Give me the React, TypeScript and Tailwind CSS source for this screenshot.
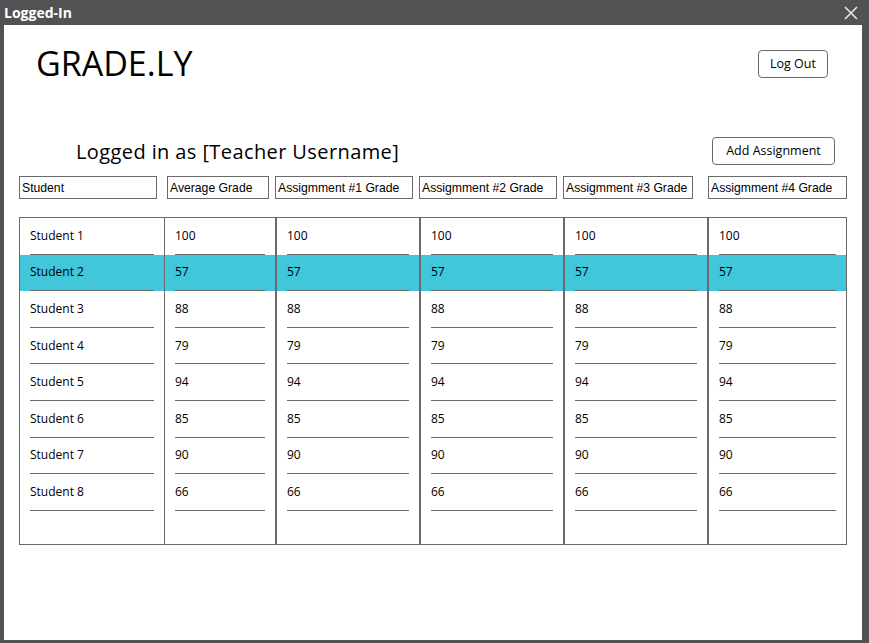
const students = [
  { name: "Student 1", grades: [100, 100, 100, 100, 100] },
  { name: "Student 2", grades: [57, 57, 57, 57, 57] },
  { name: "Student 3", grades: [88, 88, 88, 88, 88] },
  { name: "Student 4", grades: [79, 79, 79, 79, 79] },
  { name: "Student 5", grades: [94, 94, 94, 94, 94] },
  { name: "Student 6", grades: [85, 85, 85, 85, 85] },
  { name: "Student 7", grades: [90, 90, 90, 90, 90] },
  { name: "Student 8", grades: [66, 66, 66, 66, 66] },
];

// column boxes, widths read off the mockup
const cols = [
  "w-[144px]",
  "w-[111px] border-l border-[#6a6a6a]",
  "w-[144px] border-l-2 border-[#6a6a6a]",
  "w-[144px] border-l-2 border-[#6a6a6a]",
  "w-[144px] border-l-2 border-[#6a6a6a]",
  "flex-1 border-l-2 border-[#6a6a6a]",
];

const headers = [
  { label: "Student", cls: "w-[138px]" },
  { label: "Average Grade", cls: "w-[102px] ml-[10px]" },
  { label: "Assigmment #1 Grade", cls: "w-[138px] ml-[6px]" },
  { label: "Assigmment #2 Grade", cls: "w-[138px] ml-[6px]" },
  { label: "Assigmment #3 Grade", cls: "w-[130px] ml-[6px]" },
  { label: "Assigmment #4 Grade", cls: "w-[139px] ml-[15px]" },
];

function App() {
  const selected = 1;

  return (
    <div className="h-[643px] w-[869px] bg-[#525252] flex flex-col font-['Open_Sans',sans-serif] text-black">
      {/* window title bar */}
      <div className="h-[25px] flex items-center justify-between pl-[4px] pr-[11px]">
        <span className="text-white font-bold text-[14px] leading-none">Logged-In</span>
        <svg width="14" height="14" viewBox="0 0 14 14" className="text-[#e6e6e6]">
          <path d="M1 1 L13 13 M13 1 L1 13" stroke="currentColor" strokeWidth="1.6" />
        </svg>
      </div>

      <div className="flex-1 bg-white ml-[4px] mr-[7px] mb-[3px] flex flex-col">
        {/* top header */}
        <div className="flex items-start justify-between pt-[21px] pl-[32px] pr-[34px]">
          <h1 className="text-[34px] leading-[34px]">GRADE.LY</h1>
          <button className="mt-[4px] h-[28px] w-[70px] border border-[#6a6a6a] rounded-[4px] text-[12.5px]">
            Log Out
          </button>
        </div>

        <div className="flex items-center justify-between mt-[57px] pl-[72px] pr-[27px] h-[28px]">
          <h2 className="text-[20px] leading-[28px] tracking-[0.4px] pt-[2px]">Logged in as [Teacher Username]</h2>
          <button className="h-[28px] w-[123px] border border-[#6a6a6a] rounded-[4px] text-[12.5px]">
            Add Assignment
          </button>
        </div>

        {/* column headers */}
        <div className="flex mt-[11px] ml-[15px]">
          {headers.map((h) => (
            <input
              key={h.label}
              readOnly
              value={h.label}
              className={`${h.cls} h-[23px] border border-[#6a6a6a] px-[2px] text-[12.2px] font-['Liberation_Sans',sans-serif] outline-none`}
            />
          ))}
        </div>

        {/* grades table */}
        <div className="mt-[18px] ml-[15px] w-[828px] h-[328px] border border-[#6a6a6a] flex flex-col">
          {students.map((s, i) => (
            <div key={s.name} className={`flex h-[36.6px] ${i === selected ? "bg-[#41c6da]" : ""}`}>
              {[s.name, ...s.grades.map(String)].map((val, c) => (
                <div key={c} className={`${cols[c]} px-[10px] flex`}>
                  <div className="flex-1 flex items-center border-b border-[#6a6a6a] text-[12px]">{val}</div>
                </div>
              ))}
            </div>
          ))}
          <div className="flex flex-1">
            {cols.map((c, i) => (
              <div key={i} className={c} />
            ))}
          </div>
        </div>
      </div>
    </div>
  );
}

export default App;
